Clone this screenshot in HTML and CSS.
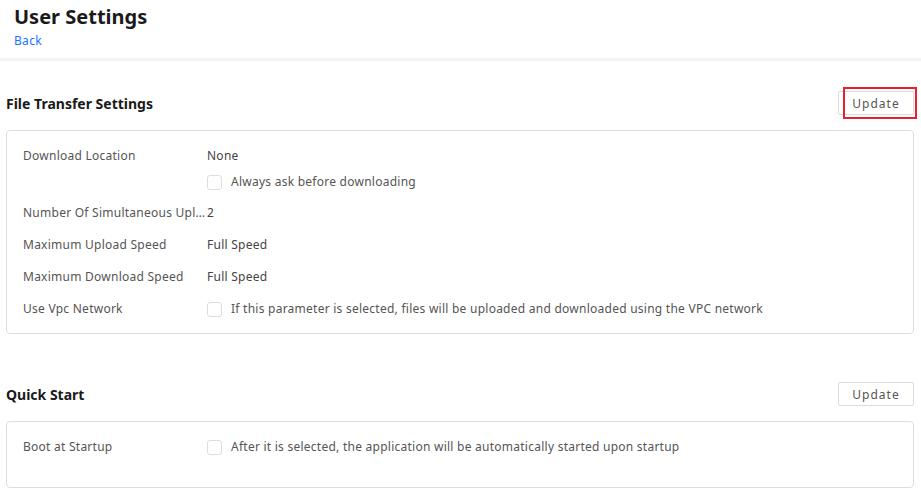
FILE: index.html
```html
<!DOCTYPE html>
<html>
<head>
<meta charset="utf-8">
<link rel="stylesheet" href="styles.css">
</head>
<body>
<header class="page-header">
  <h1 class="page-title">User Settings</h1>
  <a class="back-link" href="#">Back</a>
</header>
<main class="content">
  <section class="section section-first">
    <div class="section-head">
      <h2 class="section-title">File Transfer Settings</h2>
      <div class="btn-wrap">
        <button class="btn">Update</button>
        <span class="highlight"></span>
      </div>
    </div>
    <div class="card">
      <div class="row row-multi">
        <div class="label">Download Location</div>
        <div class="value">
          <div class="value-line">None</div>
          <label class="check-line"><span class="checkbox"></span>Always ask before downloading</label>
        </div>
      </div>
      <div class="row">
        <div class="label">Number Of Simultaneous Uploads</div>
        <div class="value">2</div>
      </div>
      <div class="row">
        <div class="label">Maximum Upload Speed</div>
        <div class="value">Full Speed</div>
      </div>
      <div class="row">
        <div class="label">Maximum Download Speed</div>
        <div class="value">Full Speed</div>
      </div>
      <div class="row">
        <div class="label">Use Vpc Network</div>
        <div class="value">
          <label class="check-line check-line-row"><span class="checkbox"></span>If this parameter is selected, files will be uploaded and downloaded using the VPC network</label>
        </div>
      </div>
    </div>
  </section>
  <section class="section section-second">
    <div class="section-head">
      <h2 class="section-title">Quick Start</h2>
      <div class="btn-wrap">
        <button class="btn">Update</button>
      </div>
    </div>
    <div class="card card-short">
      <div class="row">
        <div class="label">Boot at Startup</div>
        <div class="value">
          <label class="check-line check-line-row"><span class="checkbox"></span>After it is selected, the application will be automatically started upon startup</label>
        </div>
      </div>
    </div>
  </section>
</main>
</body>
</html>
```
FILE: styles.css
```css
html, body {
  margin: 0;
  padding: 0;
  background: #ffffff;
}
body {
  font-family: "Noto Sans", "Noto Sans CJK SC", sans-serif;
  font-size: 12px;
  color: #333333;
}
.page-header {
  height: 61px;
  padding: 4px 14px 0;
  box-sizing: border-box;
  border-bottom: 3px solid #f2f4f4;
}
.page-title {
  margin: 0;
  font-size: 20px;
  line-height: 26px;
  font-weight: 700;
  color: #1a1a1a;
}
.back-link {
  display: inline-block;
  margin-top: 2px;
  font-size: 12px;
  line-height: 18px;
  letter-spacing: 0.3px;
  color: #1677ff;
  text-decoration: none;
}
.content {
  padding: 0 7px 0 6px;
}
.section-first {
  margin-top: 30px;
}
.section-second {
  margin-top: 48px;
}
.section-head {
  display: flex;
  justify-content: space-between;
  align-items: center;
  height: 24px;
  margin-bottom: 15px;
}
.section-title {
  margin: 0;
  font-size: 14px;
  font-weight: 700;
  color: #1a1a1a;
}
.btn-wrap {
  position: relative;
}
.btn {
  display: block;
  width: 76px;
  height: 24px;
  padding: 0;
  border: 1px solid #dcdcdc;
  border-radius: 2px;
  background: #ffffff;
  font-family: inherit;
  font-size: 12px;
  letter-spacing: 1px;
  color: #555555;
}
.highlight {
  position: absolute;
  left: 5px;
  top: -4px;
  width: 74px;
  height: 32px;
  box-sizing: border-box;
  border: 2px solid #e8202a;
}
.card {
  border: 1px solid #dedede;
  border-radius: 4px;
  padding: 9px 16px 8px;
  letter-spacing: 0.25px;
}
.card-short {
  padding-bottom: 24px;
}
.row {
  display: flex;
  align-items: center;
  min-height: 32px;
}
.row-multi {
  align-items: flex-start;
  margin-bottom: 5px;
}
.label {
  width: 184px;
  flex: none;
  color: #555555;
  white-space: nowrap;
  overflow: hidden;
  text-overflow: ellipsis;
  line-height: 32px;
}
.value {
  color: #444444;
  line-height: 32px;
}
.value-line {
  line-height: 32px;
}
.check-line {
  display: flex;
  align-items: center;
  height: 20px;
  line-height: 20px;
  color: #555555;
}
.check-line-row {
  height: 32px;
}
.checkbox {
  width: 13px;
  height: 13px;
  border: 1px solid #dddddd;
  border-radius: 3px;
  margin-right: 9px;
  background: #ffffff;
  flex: none;
}
```
